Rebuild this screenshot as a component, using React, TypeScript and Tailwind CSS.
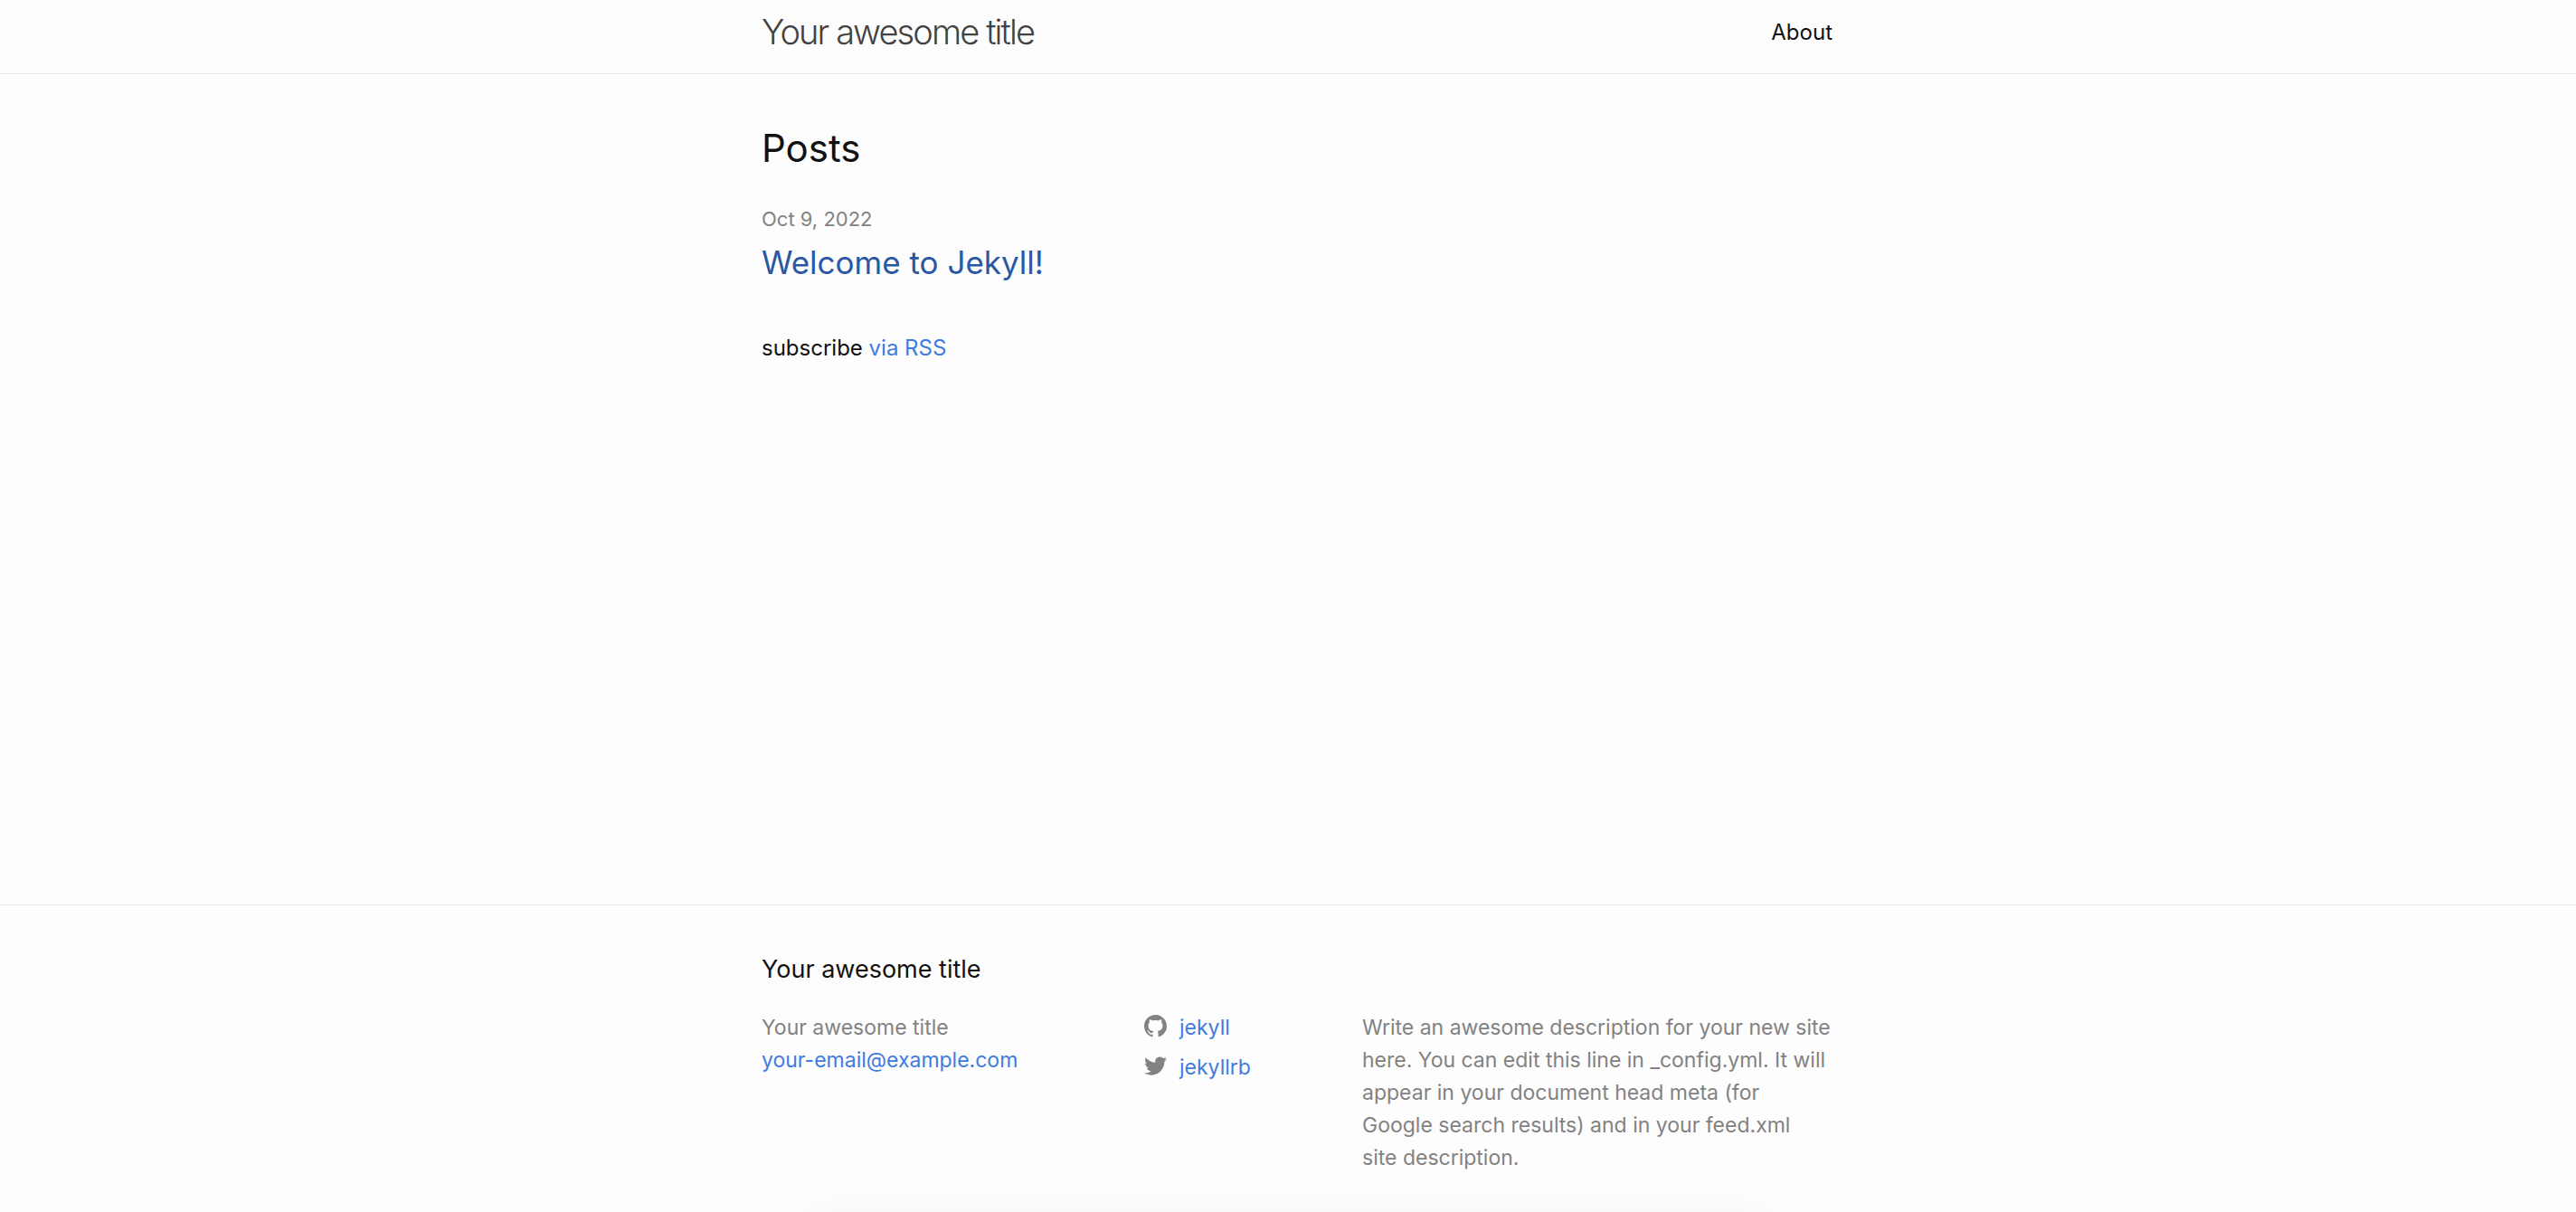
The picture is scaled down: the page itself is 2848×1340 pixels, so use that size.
import type { ReactNode } from "react";

function Wrapper({ children, className = "" }: { children: ReactNode; className?: string }) {
  return <div className={`mx-auto w-full max-w-[1204px] pl-5 ${className}`}>{children}</div>;
}

function GithubIcon() {
  return (
    <svg viewBox="0 0 16 16" className="mt-1 size-[25px] shrink-0" fill="#828282" aria-hidden="true">
      <path d="M8 0C3.58 0 0 3.582 0 8c0 3.535 2.292 6.533 5.47 7.59.4.075.547-.172.547-.385 0-.19-.007-.693-.01-1.36-2.226.483-2.695-1.073-2.695-1.073-.364-.924-.89-1.17-.89-1.17-.725-.496.056-.486.056-.486.803.056 1.225.824 1.225.824.714 1.223 1.873.87 2.33.665.072-.517.278-.87.507-1.07-1.777-.2-3.644-.888-3.644-3.953 0-.873.31-1.587.823-2.147-.09-.202-.36-1.015.07-2.117 0 0 .67-.215 2.2.82.64-.178 1.32-.266 2-.27.68.004 1.36.092 2 .27 1.52-1.035 2.19-.82 2.19-.82.43 1.102.16 1.915.08 2.117.51.56.82 1.274.82 2.147 0 3.073-1.87 3.75-3.65 3.947.28.24.54.73.54 1.48 0 1.07-.01 1.93-.01 2.19 0 .21.14.46.55.38C13.71 14.53 16 11.53 16 8c0-4.418-3.582-8-8-8" />
    </svg>
  );
}

function TwitterIcon() {
  return (
    <svg viewBox="0 0 16 16" className="mt-1 size-[25px] shrink-0" fill="#828282" aria-hidden="true">
      <path d="M15.969 3.058c-.586.26-1.217.436-1.878.515.675-.405 1.194-1.045 1.438-1.81-.632.375-1.332.647-2.076.793-.596-.636-1.446-1.033-2.387-1.033-1.806 0-3.27 1.464-3.27 3.27 0 .256.03.506.085.745C5.163 5.404 2.753 4.102 1.14 2.124c-.28.482-.44 1.044-.44 1.644 0 1.134.577 2.135 1.455 2.722-.536-.017-1.04-.164-1.482-.41v.04c0 1.585 1.128 2.907 2.623 3.208-.274.074-.563.114-.86.114-.21 0-.416-.02-.617-.058.417 1.3 1.624 2.245 3.056 2.27-1.12.88-2.53 1.402-4.06 1.402-.265 0-.526-.015-.78-.045 1.447.93 3.166 1.47 5.012 1.47 6.015 0 9.304-4.983 9.304-9.304 0-.14-.003-.283-.01-.423.64-.46 1.194-1.037 1.632-1.692z" />
    </svg>
  );
}

export default function App() {
  return (
    <div className="relative flex min-h-screen flex-col overflow-hidden bg-[#fdfdfd] font-[Inter,sans-serif] text-2xl text-[#111]">
      <header className="border-b border-[#e8e8e8]">
        <Wrapper className="flex items-center justify-between pt-1 pb-3.5">
          <a href="#home" className="text-[38px] leading-[63px] font-light tracking-tighter text-[#424242]">
            Your awesome title
          </a>
          <nav>
            <a href="#about" className="leading-[36px]">About</a>
          </nav>
        </Wrapper>
      </header>

      <main className="grow">
        <Wrapper className="pt-12">
          <h2 className="text-[42px] leading-[68px]">Posts</h2>
          <ul className="pt-6">
            <li>
              <time dateTime="2022-10-09" className="block text-[22px] leading-[40px] text-[#828282]">
                Oct 9, 2022
              </time>
              <h3 className="text-[35px] leading-[56px]">
                <a href="#welcome" className="text-[#2a57a4]">Welcome to Jekyll!</a>
              </h3>
            </li>
          </ul>
          <p className="pt-12 leading-[38px]">
            subscribe <a href="#rss" className="text-[#3f7be0]">via RSS</a>
          </p>
        </Wrapper>
      </main>

      <footer className="border-t border-[#e8e8e8] pt-[49px] pb-[42px]">
        <Wrapper>
          <h2 className="pb-6 text-[27px] leading-[44px]">Your awesome title</h2>
          <div className="grid grid-cols-[423fr_241fr_520fr] text-[23px] leading-[36px] text-[#828282]">
            <ul>
              <li>Your awesome title</li>
              <li><a href="mailto:your-email@example.com" className="text-[#3f7be0]">your-email@example.com</a></li>
            </ul>
            <ul className="flex flex-col gap-2">
              <li>
                <a href="#github" className="flex items-start gap-3.5 text-[#3f7be0]"><GithubIcon />jekyll</a>
              </li>
              <li>
                <a href="#twitter" className="flex items-start gap-3.5 text-[#3f7be0]"><TwitterIcon />jekyllrb</a>
              </li>
            </ul>
            <p>
              Write an awesome description for your new site here. You can edit this line in _config.yml. It will
              appear in your document head meta (for Google search results) and in your feed.xml{" "}
              <span className="whitespace-nowrap">site description.</span>
            </p>
          </div>
        </Wrapper>
      </footer>

      <div className="pointer-events-none absolute inset-x-0 top-full mx-auto mt-4 h-10 w-full max-w-[1040px] rounded-3xl shadow-[0_0_48px_rgba(0,0,0,0.08)]" />
    </div>
  );
}
